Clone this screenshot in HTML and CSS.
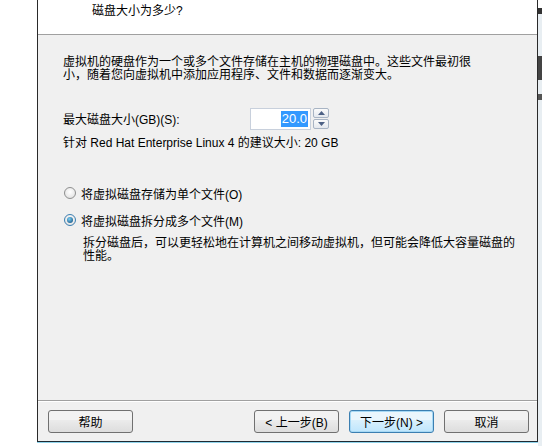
FILE: index.html
```html
<!DOCTYPE html>
<html>
<head>
<meta charset="utf-8">
<link rel="stylesheet" href="styles.css">
</head>
<body>
<div class="page">
  <div class="dialog">
    <div class="header">磁盘大小为多少?</div>
    <div class="content">
      <p class="intro">虚拟机的硬盘作为一个或多个文件存储在主机的物理磁盘中。这些文件最初很<br>小，随着您向虚拟机中添加应用程序、文件和数据而逐渐变大。</p>
      <div class="size-row">
        <span class="label">最大磁盘大小(GB)(S):</span>
        <div class="spin">
          <div class="spin-input"><span class="sel">20.0</span></div>
          <div class="spin-btns">
            <div class="spin-btn"><svg width="7" height="4" viewBox="0 0 7 4"><path d="M0 4 L3.5 0 L7 4 Z" fill="#4d6185"/></svg></div>
            <div class="spin-btn"><svg width="7" height="4" viewBox="0 0 7 4"><path d="M0 0 L3.5 4 L7 0 Z" fill="#4d6185"/></svg></div>
          </div>
        </div>
      </div>
      <p class="hint">针对 Red Hat Enterprise Linux 4 的建议大小: 20 GB</p>
      <div class="radio-row r1"><span class="radio"></span><span>将虚拟磁盘存储为单个文件(O)</span></div>
      <div class="radio-row r2"><span class="radio on"><span class="dot"></span></span><span>将虚拟磁盘拆分成多个文件(M)</span></div>
      <p class="desc">拆分磁盘后，可以更轻松地在计算机之间移动虚拟机，但可能会降低大容量磁盘的<br>性能。</p>
    </div>
    <div class="footer">
      <button class="btn">帮助</button>
      <div class="spacer"></div>
      <button class="btn">&lt; 上一步(B)</button>
      <button class="btn default">下一步(N) &gt;</button>
      <button class="btn">取消</button>
    </div>
  </div>
  <div class="edge"></div>
</div>
</body>
</html>
```
FILE: styles.css
```css
* { box-sizing: border-box; }
html, body { margin: 0; padding: 0; background: #fff; }
body {
  font-family: "Liberation Sans", "Noto Sans CJK SC", sans-serif;
  font-size: 12px;
  color: #000;
  width: 542px;
  height: 446px;
  overflow: hidden;
}
.page { display: flex; height: 446px; }
.dialog {
  margin-left: 37px;
  width: 501px;
  height: 442px;
  border-left: 1px solid #2a2a2a;
  border-right: 1px solid #2a2a2a;
  border-bottom: 1px solid #1e2a33;
  box-shadow: 0 1px 0 #8fd3ea;
  display: flex;
  flex-direction: column;
  background: #f0f0f0;
}
.edge {
  width: 4px;
  height: 446px;
  background: linear-gradient(#ffffff 0 8px, #333 8px 14px, #e8eef2 14px 56px, #444 56px 80px, #e8eef2 80px 94px, #555 94px 100px, #e8eef2 100px 100%);
}
.header {
  height: 35px;
  background: #fff;
  border-bottom: 1px solid #a0a0a0;
  padding: 4px 0 0 54px;
  font-size: 12px;
  line-height: 14px;
}
.content {
  flex: 1;
  padding: 21px 0 0 25px;
}
.intro { margin: 0; line-height: 13px; }
.size-row {
  display: flex;
  align-items: center;
  margin-top: 25px;
  height: 23px;
}
.label { width: 187px; }
.spin { display: flex; align-items: center; gap: 2px; }
.spin-input {
  width: 61px;
  height: 22px;
  border: 1px solid #c8d0dc;
  background: #fff;
  display: flex;
  align-items: center;
  justify-content: flex-end;
  padding-right: 2px;
  font-size: 13px;
}
.sel { background: #3399ff; color: #fff; line-height: 16px; padding: 0 1px; }
.spin-btns { display: flex; flex-direction: column; gap: 1px; }
.spin-btn {
  width: 16px;
  height: 10px;
  border: 1px solid #a8b4c4;
  border-radius: 2px;
  background: linear-gradient(#fbfbfb, #e4e8ee);
  display: flex;
  align-items: center;
  justify-content: center;
}
.hint { margin: 7px 0 0; line-height: 13px; }
.radio-row {
  display: flex;
  align-items: center;
  gap: 5px;
  height: 14px;
}
.r1 { margin-top: 36px; margin-left: 1px; }
.r2 { margin-top: 13px; margin-left: 1px; }
.radio {
  width: 12px;
  height: 12px;
  border-radius: 50%;
  border: 1px solid #8e8f8f;
  background: radial-gradient(circle at 50% 40%, #fff, #dcdcdc);
  display: flex;
  align-items: center;
  justify-content: center;
}
.radio.on { border-color: #3c7fb1; }
.dot {
  width: 6px;
  height: 6px;
  border-radius: 50%;
  background: radial-gradient(circle at 40% 35%, #7ad0f5, #1f5d8c 80%);
}
.desc { margin: 10px 0 0 20px; line-height: 13px; }
.footer {
  height: 41px;
  border-top: 1px solid #a0a0a0;
  box-shadow: inset 0 1px 0 #fff;
  display: flex;
  align-items: center;
  padding: 0 8px 0 10px;
  gap: 10px;
}
.spacer { flex: 1; }
.btn {
  width: 85px;
  height: 23px;
  font-family: "Liberation Sans", "Noto Sans CJK SC", sans-serif;
  font-size: 12px;
  color: #000;
  border: 1px solid #707070;
  border-radius: 3px;
  background: linear-gradient(#f2f2f2 0 45%, #ebebeb 45%, #dddddd 100%);
  padding: 0;
  margin-top: 1px;
}
.btn.default {
  border-color: #3c7fb1;
  background: linear-gradient(#eaf6fd 0 45%, #d9f0fc 45%, #bee6fd 100%);
  box-shadow: inset 0 0 0 1px #a7d9f5;
}
```
